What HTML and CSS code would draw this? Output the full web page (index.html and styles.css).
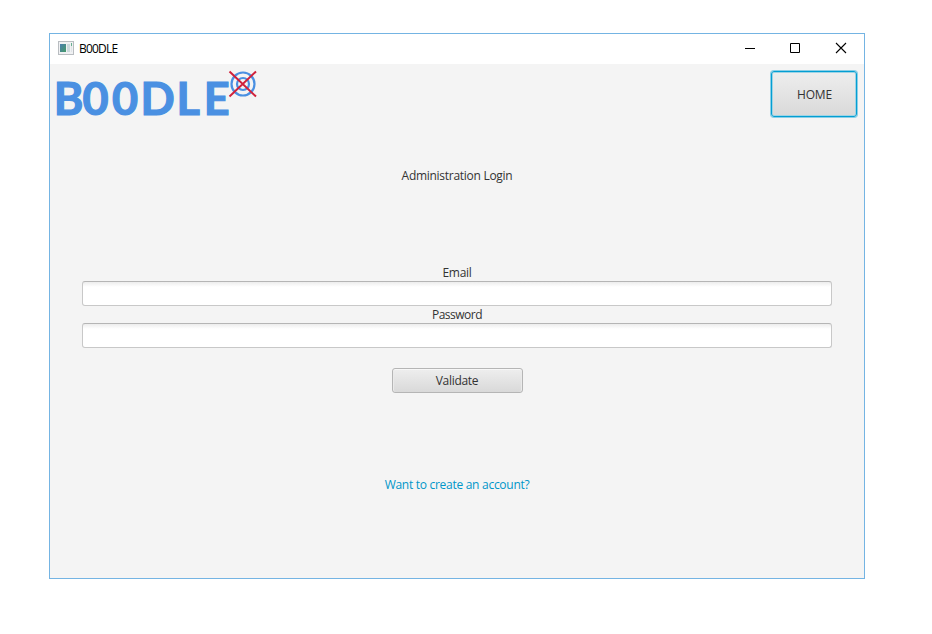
FILE: index.html
```html
<!DOCTYPE html>
<html lang="en">
<head>
<meta charset="utf-8">
<title>B00DLE</title>
<link rel="stylesheet" href="styles.css">
</head>
<body>
<main class="window">
  <header class="titlebar">
    <svg class="app-icon" width="16" height="14" viewBox="0 0 16 14">
      <defs><linearGradient id="pane" x1="0" y1="0" x2="1" y2="1"><stop offset="0" stop-color="#4b7eae"/><stop offset="1" stop-color="#459a68"/></linearGradient></defs>
      <path fill="#b9bdc1" d="M0 0h16v14H0z"/><path fill="#f0f1f3" d="M1 1h14v12H1z"/>
      <path fill="url(#pane)" d="M2 3h6v8H2z"/><path fill="#cbd9dc" d="M9 3h3v8H9z"/><path fill="#dfe3e7" d="M13 3h1v8h-1z"/><path fill="#66ae90" d="M13 2h1v3h-1z"/>
    </svg>
    <span class="title">B00DLE</span>
    <div class="controls">
      <svg width="46" height="30" viewBox="0 0 46 30"><path d="M18 14.5h10"/></svg>
      <svg width="46" height="30" viewBox="0 0 46 30"><path d="M17.500 9.500h9v9h-9z"/></svg>
      <svg width="46" height="30" viewBox="0 0 46 30"><path class="close" d="M17 9l10 10M27 9L17 19"/></svg>
    </div>
  </header>
  <section class="content">
    <div class="top">
      <svg class="logo" width="210" height="70" viewBox="0 0 210 70">
        <text x="3.800 32.400 62 90.500 126.500 153.700" y="50.800">B00DLE</text>
        <g fill="none"><circle class="ring" cx="193" cy="20" r="11.500"/><circle class="ring" cx="193" cy="20" r="6"/><path class="cross" d="M179.500 7.500l26.500 25M206 7.500L179.500 32.500"/></g>
      </svg>
      <button class="home">HOME</button>
    </div>
    <h1 class="heading">Administration Login</h1>
    <form class="form">
      <label class="label email" for="email">Email</label>
      <input class="field" id="email" type="text">
      <label class="label password" for="password">Password</label>
      <input class="field" id="password" type="password">
      <button class="validate" type="button">Validate</button>
    </form>
    <a class="create">Want to create an account?</a>
  </section>
</main>
</body>
</html>
```
FILE: styles.css
```css
* { box-sizing: border-box; }
body { margin: 0; padding: 33px 0 0 49px; background: #fff; color: #333; font: 12px/16px "Open Sans", "Noto Sans", sans-serif; letter-spacing: -.28px; }
svg { display: block; }
.window { width: 816px; height: 546px; border: 1px solid #74b4e3; background: #f4f4f4; }
.titlebar { height: 30px; display: flex; align-items: center; background: #fff; padding-left: 8px; }
.app-icon { margin-top: -3px; }
.title { margin-left: 5px; color: #000; letter-spacing: -.8px; }
.controls { display: flex; margin: 0 -1px 0 auto; }
.controls path { fill: none; stroke: #000; stroke-width: 1; }
.controls .close { stroke-width: 1.1; }
.content { display: flex; flex-direction: column; align-items: center; }
.top { width: 100%; height: 56px; display: flex; justify-content: space-between; padding-right: 7px; }
.logo { flex: none; }
.logo text { fill: #4a90e2; stroke: #4a90e2; stroke-width: 1.2px; font: 700 45px Lato, sans-serif; letter-spacing: 0; }
.ring { stroke: #4a90e2; stroke-width: 2.2; }
.cross { stroke: #d0213b; stroke-width: 2; }
button { font: inherit; letter-spacing: inherit; color: #333; border-radius: 3px; padding: 0; background: linear-gradient(#eee, #d9d9d9); border: 1px solid #b5b5b5; box-shadow: inset 0 1px #f7f7f7, inset 1px 0 #eaeaea, inset -1px 0 #eaeaea; }
.home { width: 86px; height: 46px; margin-top: 7px; padding: 2px 0 0 1px; letter-spacing: -.2px; border: 1px solid #039ed3; box-shadow: 0 0 0 1px #8bcfe6, inset 0 0 0 1px #9ed4e5; }
.heading { margin: 48px 0 0; font: inherit; }
.form { width: 750px; margin: 81px 0 0; display: flex; flex-direction: column; align-items: center; }
.label { height: 16px; }
.password { margin-top: 1px; letter-spacing: -.5px; }
.field { width: 100%; height: 25px; border: 1px solid #c8c8c8; border-top-color: #b5b5b5; border-radius: 3px; outline: 0; background: linear-gradient(#ededed, #fff 5px); }
.validate { width: 131px; height: 25px; margin-top: 20px; }
.create { margin-top: 84px; color: #0096c9; }
```
